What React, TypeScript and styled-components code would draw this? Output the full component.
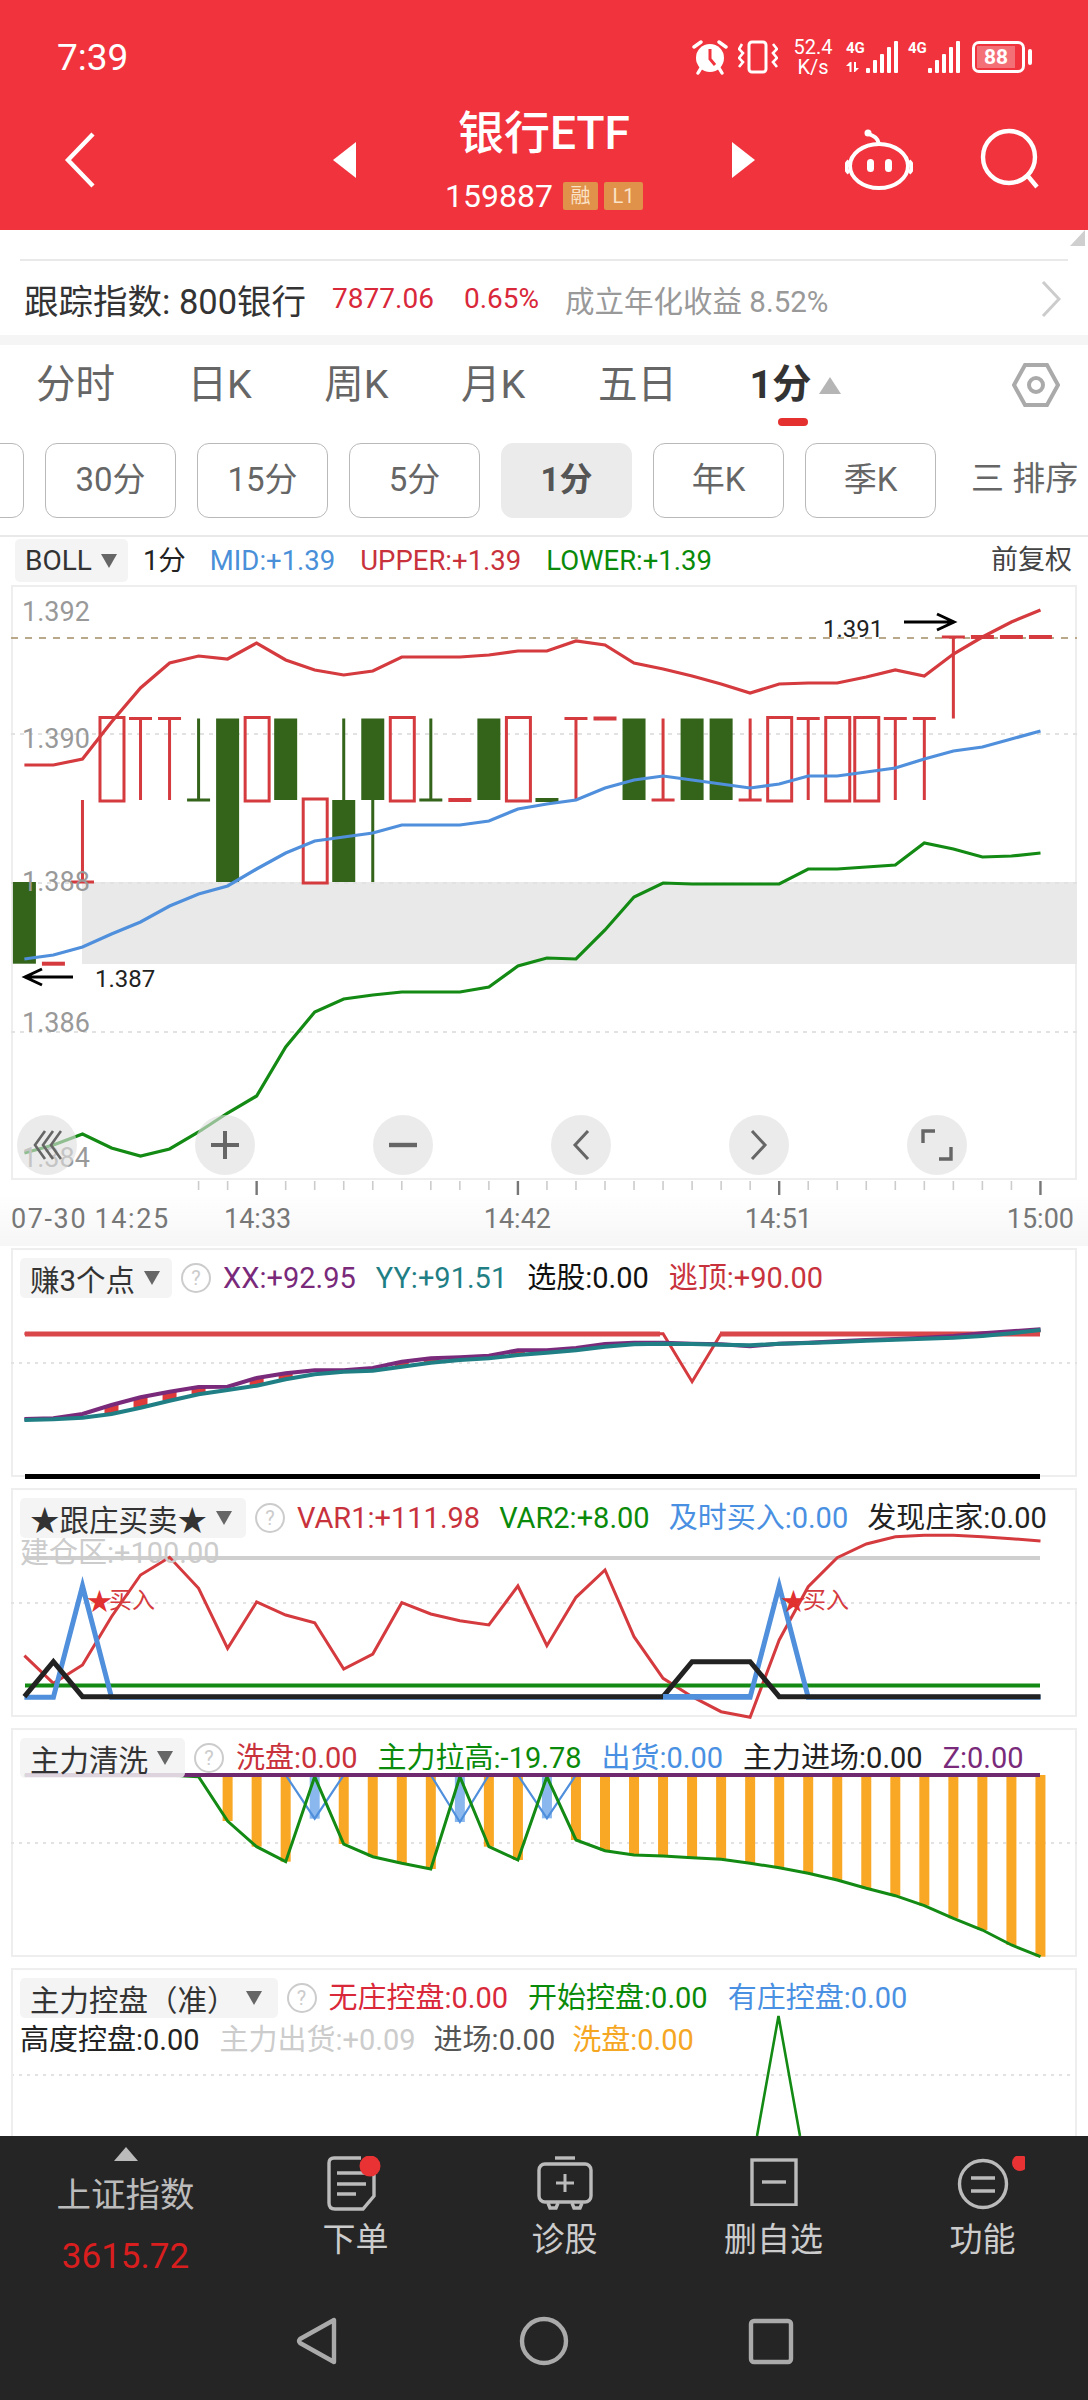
import React from 'react'
import styled, { createGlobalStyle } from 'styled-components'

const GlobalStyle = createGlobalStyle`
    html, body {
        margin: 0;
        padding: 0;
        background: #fff;
    }
    * {
        box-sizing: border-box;
    }
`

const RED = '#d43a3e'
const DARK_GREEN = '#33641a'
const LINE_GREEN = '#138a13'
const BLUE = '#4f8fdc'
const FONT = 'Roboto, "Noto Sans CJK SC", sans-serif'

const Page = styled.div`
    width: 1088px;
    height: 2400px;
    display: flex;
    flex-direction: column;
    overflow: hidden;
    background: #fff;
    font-family: ${FONT};
`

/* ---------- header ---------- */

const Header = styled.header`
    height: 230px;
    flex: none;
    background: #f0333d;
    color: #fff;
    display: flex;
    flex-direction: column;
`

const StatusBar = styled.div`
    height: 100px;
    flex: none;
    padding: 36px 63px 0 57px;
    display: flex;
    align-items: flex-start;
`

const Clock = styled.div`
    font-size: 37px;
    line-height: 44px;
    margin-right: auto;
`

const StatusIcons = styled.div`
    display: flex;
    align-items: center;
    height: 42px;
`

const VibrateWrap = styled.span`
    display: flex;
    margin-left: 10px;
`

const NetSpeed = styled.div`
    width: 46px;
    margin: 0 10px 0 12px;
    text-align: center;
    font-size: 20px;
    line-height: 20px;
`

const Signal = styled.div`
    position: relative;
    width: 52px;
    height: 32px;
    margin-right: 10px;
`

const SignalLabel = styled.span`
    position: absolute;
    left: 0;
    top: 0;
    font-size: 15px;
    line-height: 15px;
    font-weight: 700;
`

const Battery = styled.div`
    position: relative;
    width: 53px;
    height: 32px;
    margin-left: 2px;
    border: 3px solid #fff;
    border-radius: 7px;
    padding: 2px;
    &::after {
        content: '';
        position: absolute;
        right: -10px;
        top: 5px;
        width: 4px;
        height: 16px;
        border-radius: 2px;
        background: #fff;
    }
`

const BatteryFill = styled.div`
    width: 38px;
    height: 22px;
    background: rgba(255, 255, 255, 0.3);
    text-align: center;
    font-size: 21px;
    line-height: 22px;
    font-weight: 700;
`

const NavRow = styled.div`
    flex: 1;
    display: grid;
    grid-template-columns: 1fr 422px 1fr;
    align-items: center;
    padding-bottom: 10px;
`

const NavLeft = styled.div`
    padding-left: 64px;
    display: flex;
`

const NavRight = styled.div`
    display: flex;
    justify-content: flex-end;
    padding-right: 48px;
    gap: 67px;
`

const TitleBlock = styled.div`
    display: flex;
    align-items: center;
    justify-content: space-between;
`

const Titles = styled.div`
    display: flex;
    flex-direction: column;
    align-items: center;
`

const Title = styled.div`
    font-size: 46px;
    line-height: 52px;
    font-weight: 500;
`

const CodeRow = styled.div`
    display: flex;
    align-items: center;
    font-size: 32px;
    line-height: 36px;
    margin-top: 19px;
`

const Badge = styled.span`
    width: ${props => props.$width}px;
    height: 28px;
    margin-left: ${props => props.$gap}px;
    background: #e0914a;
    border-radius: 2px;
    text-align: center;
    font-size: 20px;
    line-height: 28px;
    color: #fbe3c8;
`

/* ---------- tracking row ---------- */

const TrackRow = styled.div`
    position: relative;
    height: 105px;
    flex: none;
    padding-top: 29px;
    &::before {
        content: '';
        position: absolute;
        right: 3px;
        top: 0;
        border-left: 15px solid transparent;
        border-bottom: 16px solid #cfcfcf;
    }
`

const TrackInner = styled.div`
    margin: 0 20px;
    border-top: 2px solid #e9e9e9;
    padding: 15px 4px 0;
    display: flex;
    align-items: center;
    height: 62px;
`

const TrackText = styled.span`
    font-size: ${props => props.$size}px;
    color: ${props => props.$color};
    margin-right: ${props => props.$gap}px;
    white-space: nowrap;
`

const Chevron = styled.svg`
    margin-left: auto;
    margin-right: 3px;
`

const GrayBand = styled.div`
    height: 10px;
    flex: none;
    background: #f5f5f5;
`

/* ---------- period tabs ---------- */

const Tabs = styled.div`
    height: 98px;
    flex: none;
    padding: 16px 28px 0 36px;
    display: flex;
    gap: 72.5px;
`

const Tab = styled.div`
    position: relative;
    font-size: 39.5px;
    line-height: 48px;
    height: 48px;
    color: ${props => (props.$active ? '#333' : '#666')};
    font-weight: ${props => (props.$active ? 700 : 400)};
`

const TabArrow = styled.span`
    position: absolute;
    left: 70px;
    top: 16px;
    border-left: 11px solid transparent;
    border-right: 11px solid transparent;
    border-bottom: 17px solid #b5b5b5;
`

const TabMark = styled.span`
    position: absolute;
    left: 29px;
    top: 57px;
    width: 30px;
    height: 8px;
    border-radius: 4px;
    background: #e4312f;
`

const GearIcon = styled.svg`
    margin-left: auto;
    margin-top: 2px;
`

const Periods = styled.div`
    height: 94px;
    flex: none;
    margin-left: -107px;
    display: flex;
    gap: 21px;
    border-bottom: 2px solid #e9e9e9;
`

const PeriodButton = styled.div`
    width: 131px;
    height: 75px;
    flex: none;
    border: 1px solid ${props => (props.$active ? '#ebebeb' : '#b9b9b9')};
    border-radius: 12px;
    background: ${props => (props.$active ? '#ebebeb' : '#fff')};
    color: ${props => (props.$active ? '#555' : '#666')};
    font-weight: ${props => (props.$active ? 700 : 400)};
    font-size: 33px;
    line-height: 72px;
    text-align: center;
`

const SortButton = styled.div`
    margin-left: 14px;
    font-size: 33px;
    line-height: 72px;
    color: #666;
    white-space: nowrap;
`

/* ---------- indicator legend ---------- */

const MainLegend = styled.div`
    height: 48px;
    flex: none;
    padding: 2px 16px 0 15px;
    display: flex;
    align-items: flex-start;
`

const Select = styled.div`
    height: ${props => props.$height || 40}px;
    padding: 0 ${props => props.$pad || 12}px 0 10px;
    background: rgba(242, 242, 242, 0.85);
    border-radius: 5px;
    display: flex;
    align-items: center;
    gap: 9px;
    flex: none;
    font-size: ${props => props.$size || 29.5}px;
    color: #333;
    white-space: nowrap;
`

const Caret = styled.span`
    border-left: 8px solid transparent;
    border-right: 8px solid transparent;
    border-top: 14px solid #666;
`

const MainItem = styled.span`
    font-size: 27.5px;
    line-height: 43px;
    margin-left: ${props => props.$gap}px;
    color: ${props => props.$color};
    white-space: nowrap;
`

const Adjust = styled.span`
    margin-left: auto;
    font-size: 27px;
    line-height: 43px;
    color: #444;
`

/* ---------- chart frames ---------- */

const Frame = styled.section`
    position: relative;
    flex: none;
    height: ${props => props.$height}px;
    margin: 0 11px ${props => props.$after}px;
    border: 2px solid #eee;
    background: #fff;
`

const OpenFrame = styled(Frame)`
    flex: 1;
    height: auto;
    margin-bottom: 0;
    border-bottom: 0;
    overflow: hidden;
`

const ChartSvg = styled.svg`
    position: absolute;
    left: -13px;
    top: -2px;
    width: 1088px;
    overflow: visible;
    font-family: ${FONT};
`

const Legend = styled.div`
    position: relative;
    z-index: 1;
    padding: 8px 0 0 7px;
    display: flex;
    flex-wrap: wrap;
    align-items: center;
    row-gap: 0;
    height: ${props => props.$height || 48}px;
`

const Help = styled.span`
    width: 30px;
    height: 30px;
    flex: none;
    margin: 0 12px 0 9px;
    border: 2px solid #ccc;
    border-radius: 50%;
    color: #ccc;
    text-align: center;
    font-size: 20px;
    line-height: 26px;
`

const Item = styled.span`
    font-size: 29px;
    line-height: 40px;
    color: ${props => props.$color};
    margin-right: ${props => props.$gap ?? 20}px;
    white-space: nowrap;
`

const LegendBreak = styled.div`
    flex-basis: 100%;
    height: 0;
`

const FaintLabel = styled.div`
    position: absolute;
    left: 7px;
    top: 47px;
    font-size: 29px;
    line-height: 32px;
    color: #ccc;
`

const FloatBar = styled.div`
    position: absolute;
    left: 4px;
    top: 528px;
    display: flex;
    gap: 118px;
`

const FloatButton = styled.div`
    width: 60px;
    height: 60px;
    border-radius: 50%;
    background: rgba(222, 222, 222, 0.62);
    display: flex;
    align-items: center;
    justify-content: center;
`

const TimeAxis = styled.div`
    position: relative;
    height: 66px;
    flex: none;
    margin-bottom: 2px;
    background: linear-gradient(#fff 20%, #f6f6f6 100%);
`

const AxisTicks = styled.svg`
    position: absolute;
    left: 0;
    top: 0;
`

const AxisLabels = styled.div`
    display: flex;
    padding: 22px 14px 0 11px;
    font-size: 27px;
    line-height: 34px;
    color: #777;
`

const AxisLabel = styled.span`
    width: ${props => props.$width}px;
    flex: none;
    text-align: ${props => props.$align || 'left'};
`

const AxisDate = styled(AxisLabel)`
    letter-spacing: 1.6px;
    word-spacing: -1px;
    white-space: nowrap;
`

/* ---------- bottom bar ---------- */

const BottomBar = styled.footer`
    height: 264px;
    flex: none;
    background: #252525;
    display: flex;
    flex-direction: column;
`

const BottomTabs = styled.div`
    height: 168px;
    flex: none;
    display: grid;
    grid-template-columns: 251px repeat(4, 209px);
`

const IndexTab = styled.div`
    display: flex;
    flex-direction: column;
    align-items: center;
    padding-top: 11px;
`

const IndexArrow = styled.span`
    border-left: 12px solid transparent;
    border-right: 12px solid transparent;
    border-bottom: 14px solid #bbb;
`

const IndexName = styled.div`
    margin-top: 14px;
    font-size: 34.5px;
    line-height: 40px;
    color: #bbb;
`

const IndexValue = styled.div`
    margin-top: 21px;
    font-size: 35px;
    line-height: 42px;
    color: #d81e1e;
`

const BarTab = styled.div`
    display: flex;
    flex-direction: column;
    align-items: center;
    padding-top: 20px;
`

const IconSlot = styled.div`
    height: 58px;
    display: flex;
    align-items: flex-start;
`

const BarTabLabel = styled.div`
    margin-top: 5px;
    font-size: 33px;
    line-height: 42px;
    color: #ccc;
`

const SystemNav = styled.div`
    flex: 1;
    display: flex;
    justify-content: center;
    gap: 167px;
    padding-top: 7px;
`

/* ---------- chart data ---------- */

const xAt = (i: number) => 24.4 + 29.03 * i
const toPoints = (ys: number[], from = 0) => ys.map((y, i) => `${xAt(i + from).toFixed(1)},${y.toFixed(1)}`).join(' ')
const zoomY = (base: number, ys: number[]) => ys.map(py => base + py / 3)

const LEVELS = [637, 718.5, 800, 882, 963.7]

type Candle = ['solid' | 'hollow' | 'top' | 'bottom' | 'dash', 'r' | 'g', number, number?]

const CANDLES: Candle[] = [
    ['solid', 'g', 3, 4],
    ['dash', 'r', 4],
    ['bottom', 'r', 2, 3],
    ['hollow', 'r', 1, 2],
    ['top', 'r', 1, 2],
    ['top', 'r', 1, 2],
    ['bottom', 'g', 1, 2],
    ['solid', 'g', 1, 3],
    ['hollow', 'r', 1, 2],
    ['solid', 'g', 1, 2],
    ['hollow', 'r', 2, 3],
    ['solid', 'g', 2, 3],
    ['solid', 'g', 1, 2],
    ['hollow', 'r', 1, 2],
    ['bottom', 'g', 1, 2],
    ['dash', 'r', 2],
    ['solid', 'g', 1, 2],
    ['hollow', 'r', 1, 2],
    ['dash', 'g', 2],
    ['top', 'r', 1, 2],
    ['dash', 'r', 1],
    ['solid', 'g', 1, 2],
    ['bottom', 'r', 1, 2],
    ['solid', 'g', 1, 2],
    ['solid', 'g', 1, 2],
    ['bottom', 'r', 1, 2],
    ['hollow', 'r', 1, 2],
    ['top', 'r', 1, 2],
    ['hollow', 'r', 1, 2],
    ['hollow', 'r', 1, 2],
    ['top', 'r', 1, 2],
    ['top', 'r', 1, 2],
    ['top', 'r', 0, 1],
    ['dash', 'r', 0],
    ['dash', 'r', 0],
    ['dash', 'r', 0],
]

// extra wicks sitting next to a body
const WICKS: [number, number, number][] = [
    [11, 1, 2],
    [12, 2, 3],
]

const UPPER = [
    765, 765, 759, 722, 688, 663, 656, 659, 643, 660, 670, 675, 671, 657, 657, 657, 655, 651, 651, 641, 645, 663, 669,
    676, 684, 693, 684, 683, 683, 677, 670, 676, 654, 637, 622, 610,
]
const MID = [
    959, 955, 947, 934, 922, 906, 894, 886, 869, 853, 841, 837, 833, 825, 825, 825, 821, 809, 804, 800, 788, 780, 776,
    780, 784, 788, 784, 776, 776, 772, 768, 759, 751, 747, 739, 731,
]
const LOWER = [
    1153, 1145, 1134, 1148, 1156, 1149, 1132, 1113, 1096, 1047, 1012, 999, 995, 992, 992, 992, 987, 966, 958, 959, 930,
    897, 883, 884, 884, 884, 884, 869, 869, 867, 865, 843, 849, 857, 856, 853,
]

const XX = zoomY(1240, [
    537, 535, 522, 495, 472, 455, 441, 440, 414, 400, 391, 391, 384, 365, 355, 352, 347, 331, 331, 324, 312, 308, 308,
    311, 313, 319, 311, 308, 304, 300, 297, 293, 288, 280, 274, 268,
])
const YY = zoomY(1240, [
    540, 538, 533, 522, 503, 482, 463, 450, 437, 418, 403, 395, 392, 380, 368, 360, 355, 345, 338, 331, 320, 313, 311,
    312, 314, 316, 311, 309, 306, 302, 299, 296, 293, 288, 280, 270,
])
const ESCAPE = zoomY(1240, [
    281, 281, 281, 281, 281, 281, 281, 281, 281, 281, 281, 281, 281, 281, 281, 281, 281, 281, 281, 281, 281, 281, 281,
    425, 281, 281, 281, 281, 281, 281, 281, 281, 281, 281, 281, 273,
])

const VAR1 = zoomY(1480, [
    527, 610, 555, 410, 285, 232, 325, 505, 366, 405, 428, 567, 522, 368, 402, 422, 435, 318, 497, 352, 270, 470, 595,
    650, 695, 712, 480, 320, 233, 192, 170, 166, 166, 170, 176, 183,
])
const BUY_LOW = Array.from({ length: 36 }, (_, i) => (i === 2 || i === 26 ? 318 : 652))
const BANKER = Array.from({ length: 36 }, (_, i) => (i === 1 || i === 23 || i === 24 || i === 25 ? 545 : 650))

const WASH_BARS: [number, number, boolean?][] = [
    [7, 303],
    [8, 380],
    [9, 425],
    [10, 296, true],
    [11, 372],
    [12, 410],
    [13, 430],
    [14, 447],
    [15, 306, true],
    [16, 380],
    [17, 420],
    [18, 295, true],
    [19, 360],
    [20, 392],
    [21, 405],
    [22, 408],
    [23, 413],
    [24, 418],
    [25, 430],
    [26, 443],
    [27, 460],
    [28, 480],
    [29, 505],
    [30, 527],
    [31, 557],
    [32, 595],
    [33, 630],
    [34, 675],
    [35, 710],
]
const PULL_UP = zoomY(1720, [
    166, 166, 166, 166, 166, 166, 170, 303, 380, 425, 170, 372, 410, 430, 447, 170, 380, 420, 170, 360, 392, 405, 408,
    413, 418, 430, 443, 460, 480, 505, 527, 557, 595, 630, 675, 710,
])

const WEEKS = ['分时', '日K', '周K', '月K', '五日']
const PERIODS = ['30分', '15分', '5分', '1分', '年K', '季K']

/* ---------- drawings ---------- */

const renderCandle = ([kind, tone, a, b]: Candle, i: number) => {
    const color = tone === 'r' ? RED : DARK_GREEN
    const x = xAt(i)
    const top = LEVELS[a]
    const bottom = b === undefined ? top : LEVELS[b]
    if (kind === 'solid') return <rect key={i} x={x - 11.5} y={top} width={23} height={bottom - top} fill={color} />
    if (kind === 'hollow')
        return (
            <rect key={i} x={x - 11.5} y={top - 1} width={24} height={bottom - top + 2} fill="none" stroke={color} strokeWidth={3} />
        )
    if (kind === 'dash') return <rect key={i} x={x - 11.5} y={top - 2} width={23} height={4} fill={color} />
    return (
        <g key={i} fill={color}>
            <rect x={x - 1.5} y={top} width={3} height={bottom - top} />
            <rect x={x - 11.5} y={(kind === 'top' ? top : bottom) - 1.5} width={23} height={3} />
        </g>
    )
}

const MainChart = () => (
    <ChartSvg viewBox="0 585 1088 595" height={595}>
        <rect x={82} y={882} width={995} height={82} fill="#e9e9e9" />
        <line x1={11} x2={1077} y1={638} y2={638} stroke="#b9a98a" strokeWidth={2} strokeDasharray="7 7" />
        {[734, 883, 1032].map(y => (
            <line key={y} x1={11} x2={1077} y1={y} y2={y} stroke="#e2e2e2" strokeWidth={2} strokeDasharray="4 5" />
        ))}
        {CANDLES.map(renderCandle)}
        {WICKS.map(([i, a, b]) => (
            <rect key={i} x={xAt(i) - 1.5} y={LEVELS[a]} width={3} height={LEVELS[b] - LEVELS[a]} fill={DARK_GREEN} />
        ))}
        <polyline points={toPoints(UPPER)} fill="none" stroke={RED} strokeWidth={3.2} />
        <polyline points={toPoints(MID)} fill="none" stroke={BLUE} strokeWidth={3.2} />
        <polyline points={toPoints(LOWER)} fill="none" stroke={LINE_GREEN} strokeWidth={3.2} />
        <g fill="#999" fontSize={27}>
            <text x={22} y={620.5}>1.392</text>
            <text x={22} y={748}>1.390</text>
            <text x={22} y={891}>1.388</text>
            <text x={22} y={1032}>1.386</text>
            <text x={22} y={1167}>1.384</text>
        </g>
        <g fill="#222" fontSize={24}>
            <text x={823} y={637}>1.391</text>
            <text x={95} y={987}>1.387</text>
        </g>
        <g fill="none" stroke="#000" strokeWidth={3}>
            <path d="M904 622 H953 M937 614 L954 622 L937 630" />
            <path d="M73 977 H26 M42 969 L25 977 L42 985" />
        </g>
    </ChartSvg>
)

const EarnChart = () => (
    <ChartSvg viewBox="0 1248 1088 229" height={229}>
        <line x1={11} x2={1077} y1={1363} y2={1363} stroke="#e2e2e2" strokeWidth={2} strokeDasharray="3 5" />
        {XX.map((y, i) =>
            YY[i] - y > 4 ? <rect key={i} x={xAt(i) - 7} y={y} width={14} height={YY[i] - y} fill="#df3a3a" /> : null,
        )}
        <polyline points={toPoints(ESCAPE)} fill="none" stroke={RED} strokeWidth={3} />
        <rect x={25} y={1331.5} width={635} height={5} fill="#d9474b" />
        <rect x={720} y={1331.5} width={320} height={5} fill="#d9474b" />
        <polyline points={toPoints(XX)} fill="none" stroke="#7a2a7a" strokeWidth={4} />
        <polyline points={toPoints(YY)} fill="none" stroke="#1f7f85" strokeWidth={4} />
        <rect x={25} y={1474} width={1015} height={5} fill="#000" />
    </ChartSvg>
)

const BuyLabel = ({ x }: { x: number }) => (
    <g>
        <text x={x} y={1610} fill="#e03030" fontSize={25}>★</text>
        <text x={x + 22} y={1608} fill={RED} fontSize={23}>买入</text>
    </g>
)

const BankerChart = () => (
    <ChartSvg viewBox="0 1488 1088 229" height={229}>
        <line x1={11} x2={1077} y1={1603} y2={1603} stroke="#e2e2e2" strokeWidth={2} strokeDasharray="3 5" />
        <rect x={25} y={1556} width={1015} height={4} fill="#cfcfcf" />
        <polyline points={toPoints(VAR1)} fill="none" stroke={RED} strokeWidth={3} />
        <rect x={25} y={1683.5} width={1015} height={4} fill={LINE_GREEN} />
        <polyline points={toPoints(zoomY(1480, BUY_LOW))} fill="none" stroke={BLUE} strokeWidth={5} />
        <polyline points={toPoints(zoomY(1480, BANKER).slice(0, 23))} fill="none" stroke="#222" strokeWidth={5} />
        <polyline points={toPoints(zoomY(1480, BANKER).slice(22), 22)} fill="none" stroke="#222" strokeWidth={5} />
        <rect x={xAt(22)} y={1694} width={xAt(25) - xAt(22)} height={5} fill={BLUE} />
        <BuyLabel x={87} />
        <BuyLabel x={781} />
    </ChartSvg>
)

const WashChart = () => (
    <ChartSvg viewBox="0 1728 1088 229" height={229}>
        <line x1={11} x2={1077} y1={1843} y2={1843} stroke="#e2e2e2" strokeWidth={2} strokeDasharray="3 5" />
        {WASH_BARS.map(([i, py, blue]) => (
            <rect
                key={i}
                x={xAt(i) - 5}
                y={1775}
                width={10}
                height={1720 + py / 3 - 1775}
                fill={blue ? '#8ab8ee' : '#f9a825'}
            />
        ))}
        <g fill="none" stroke={BLUE} strokeWidth={2.2}>
            <polyline points={`${xAt(9)},1775 ${xAt(10)},1818.7 ${xAt(11)},1775`} />
            <polyline points={`${xAt(14)},1775 ${xAt(15)},1822 ${xAt(16)},1775`} />
            <polyline points={`${xAt(17)},1775 ${xAt(18)},1818.3 ${xAt(19)},1775`} />
        </g>
        <polyline points={toPoints(PULL_UP)} fill="none" stroke={LINE_GREEN} strokeWidth={3} />
        <rect x={25} y={1773} width={1015} height={4} fill="#6f2a6f" />
    </ChartSvg>
)

const ControlChart = () => (
    <ChartSvg viewBox="0 1968 1088 168" height={168}>
        <line x1={11} x2={1077} y1={2075} y2={2075} stroke="#e2e2e2" strokeWidth={2} strokeDasharray="3 5" />
        <polyline points="757,2136 778.5,2016 800,2136" fill="none" stroke={LINE_GREEN} strokeWidth={2.6} />
    </ChartSvg>
)

const AlarmIcon = () => (
    <svg width={36} height={36} viewBox="0 0 36 36">
        <circle cx={18} cy={19} r={14} fill="#fff" />
        <path d="M18 10 V20 L23 26" fill="none" stroke="#f0333d" strokeWidth={3} />
        <path d="M2 8 L9 3 M34 8 L27 3" stroke="#fff" strokeWidth={3.4} strokeLinecap="round" />
        <path d="M6 34 L9 29 M30 34 L27 29" stroke="#fff" strokeWidth={3.4} strokeLinecap="round" />
    </svg>
)

const VibrateIcon = () => (
    <VibrateWrap>
        <svg width={40} height={34} viewBox="0 0 40 34">
            <rect x={11} y={2} width={17} height={30} rx={3} fill="none" stroke="#fff" strokeWidth={3} />
            <path d="M4 4 L1 9 L5 13 L1 18 L5 22 L1 27" fill="none" stroke="#fff" strokeWidth={2.6} />
            <path d="M35 4 L39 9 L35 13 L39 18 L35 22 L39 27" fill="none" stroke="#fff" strokeWidth={2.6} />
        </svg>
    </VibrateWrap>
)

const SignalBars = ({ arrows }: { arrows?: boolean }) => (
    <svg width={52} height={32} viewBox="0 0 52 32" fill="#fff">
        {arrows && <path d="M0 25 L4 21 H5.5 V31 H3.5 V25 Z M8 21 H10 V27 H13 L9 31 H8 Z" />}
        <rect x={20} y={27} width={4} height={5} rx={1} />
        <rect x={27} y={19} width={4} height={13} rx={1} />
        <rect x={34} y={13} width={4} height={19} rx={1} />
        <rect x={41} y={6} width={4} height={26} rx={1} />
        <rect x={48} y={0} width={4} height={32} rx={1} />
    </svg>
)

const BackIcon = () => (
    <svg width={34} height={58} viewBox="0 0 34 58">
        <path d="M29 3 L4 29 L29 55" fill="none" stroke="#fff" strokeWidth={4.4} />
    </svg>
)

const Triangle = ({ right }: { right?: boolean }) => (
    <svg width={23} height={36} viewBox="0 0 23 36">
        <path d={right ? 'M0 0 L23 18 L0 36 Z' : 'M23 0 L0 18 L23 36 Z'} fill="#fff" />
    </svg>
)

const RobotIcon = () => (
    <svg width={68} height={64} viewBox="0 0 68 64" fill="none" stroke="#fff" strokeWidth={4}>
        <ellipse cx={34} cy={38} rx={29} ry={22} />
        <path d="M4 33 C0 36 0 42 4 45 M64 33 C68 36 68 42 64 45" />
        <path d="M34 16 C33 10 29 8 24 6" />
        <circle cx={23} cy={5} r={3.5} fill="#fff" stroke="none" />
        <rect x={22} y={31} width={7} height={13} rx={3.5} fill="#fff" stroke="none" />
        <rect x={40} y={31} width={7} height={13} rx={3.5} fill="#fff" stroke="none" />
    </svg>
)

const SearchIcon = () => (
    <svg width={60} height={62} viewBox="0 0 60 62" fill="none" stroke="#fff" strokeWidth={4.4}>
        <circle cx={29} cy={29} r={26} />
        <path d="M47 47 L57 59" />
    </svg>
)

const FloatIcons = [
    <svg key="rewind" width={30} height={32} viewBox="0 0 30 32" fill="none" stroke="#666" strokeWidth={2.6}>
        <path d="M13 2 L3 16 L13 30 M21 2 L11 16 L21 30 M29 2 L19 16 L29 30" />
    </svg>,
    <svg key="plus" width={30} height={30} viewBox="0 0 30 30" stroke="#666" strokeWidth={4}>
        <path d="M15 1 V29 M1 15 H29" />
    </svg>,
    <svg key="minus" width={30} height={30} viewBox="0 0 30 30" stroke="#666" strokeWidth={4.4}>
        <path d="M1 15 H29" />
    </svg>,
    <svg key="prev" width={18} height={30} viewBox="0 0 18 30" fill="none" stroke="#666" strokeWidth={3}>
        <path d="M16 1 L3 15 L16 29" />
    </svg>,
    <svg key="next" width={18} height={30} viewBox="0 0 18 30" fill="none" stroke="#666" strokeWidth={3}>
        <path d="M2 1 L15 15 L2 29" />
    </svg>,
    <svg key="fit" width={32} height={32} viewBox="0 0 32 32" fill="none" stroke="#666" strokeWidth={3.4}>
        <path d="M14 2 H2 V14 M30 18 V30 H18" />
    </svg>,
]

const AxisTickMarks = () => (
    <AxisTicks width={1088} height={20}>
        {Array.from({ length: 30 }, (_, n) => {
            const i = n + 6
            const major = (i - 8) % 9 === 0
            return (
                <line
                    key={i}
                    x1={xAt(i)}
                    x2={xAt(i)}
                    y1={1}
                    y2={major ? 15 : 10}
                    stroke={major ? '#777' : '#ccc'}
                    strokeWidth={major ? 2.4 : 1.6}
                />
            )
        })}
    </AxisTicks>
)

const OrderIcon = () => (
    <svg width={64} height={58} viewBox="0 0 64 58" fill="none" stroke="#bbb" strokeWidth={3.4}>
        <path d="M37 2 H10 Q5 2 5 7 V47 Q5 53 11 53 H39 L50 40 V14" />
        <path d="M13 17 H42 M13 28 H42 M13 38 H32" />
        <circle cx={46} cy={10} r={10.5} fill="#e83234" stroke="none" />
    </svg>
)

const DiagnoseIcon = () => (
    <svg width={58} height={54} viewBox="0 0 58 54" fill="none" stroke="#bbb" strokeWidth={3.4}>
        <path d="M19 2 H39" />
        <rect x={3} y={8} width={52} height={38} rx={6} />
        <path d="M29 18 V36 M20 27 H38" strokeWidth={3} />
        <path d="M12 47 L14 52 H20 L22 47 M36 47 L38 52 H44 L46 47" />
    </svg>
)

const RemoveIcon = () => (
    <svg width={48} height={50} viewBox="0 0 48 50" fill="none" stroke="#bbb" strokeWidth={3.4}>
        <rect x={2} y={4} width={44} height={45} />
        <path d="M12 26 H36" />
    </svg>
)

const MoreIcon = () => (
    <svg width={84} height={58} viewBox="0 0 84 58" fill="none" stroke="#bbb" strokeWidth={3.4}>
        <circle cx={42} cy={28} r={23.5} />
        <path d="M30 22 H54 M30 35 H54" />
        <circle cx={79} cy={7} r={8} fill="#e83234" stroke="none" />
    </svg>
)

const App = () => {
    return (
        <Page>
            <GlobalStyle />
            <Header>
                <StatusBar>
                    <Clock>7:39</Clock>
                    <StatusIcons>
                        <AlarmIcon />
                        <VibrateIcon />
                        <NetSpeed>
                            52.4
                            <br />
                            K/s
                        </NetSpeed>
                        <Signal>
                            <SignalLabel>4G</SignalLabel>
                            <SignalBars arrows />
                        </Signal>
                        <Signal>
                            <SignalLabel>4G</SignalLabel>
                            <SignalBars />
                        </Signal>
                        <Battery>
                            <BatteryFill>88</BatteryFill>
                        </Battery>
                    </StatusIcons>
                </StatusBar>
                <NavRow>
                    <NavLeft>
                        <BackIcon />
                    </NavLeft>
                    <TitleBlock>
                        <Triangle />
                        <Titles>
                            <Title>银行ETF</Title>
                            <CodeRow>
                                159887
                                <Badge $width={35} $gap={10}>融</Badge>
                                <Badge $width={39} $gap={6}>L1</Badge>
                            </CodeRow>
                        </Titles>
                        <Triangle right />
                    </TitleBlock>
                    <NavRight>
                        <RobotIcon />
                        <SearchIcon />
                    </NavRight>
                </NavRow>
            </Header>

            <TrackRow>
                <TrackInner>
                    <TrackText $size={34.5} $color="#333" $gap={26}>跟踪指数: 800银行</TrackText>
                    <TrackText $size={28} $color="#d9283a" $gap={30}>7877.06</TrackText>
                    <TrackText $size={28} $color="#d9283a" $gap={26}>0.65%</TrackText>
                    <TrackText $size={29.5} $color="#999" $gap={0}>成立年化收益 8.52%</TrackText>
                    <Chevron width={20} height={36} viewBox="0 0 20 36">
                        <path d="M2 1 L18 18 L2 35" fill="none" stroke="#ccc" strokeWidth={3} />
                    </Chevron>
                </TrackInner>
            </TrackRow>
            <GrayBand />

            <Tabs>
                {WEEKS.map(name => (
                    <Tab key={name}>{name}</Tab>
                ))}
                <Tab $active>
                    1分
                    <TabArrow />
                    <TabMark />
                </Tab>
                <GearIcon width={48} height={44} viewBox="0 0 48 44" fill="none" stroke="#aaa">
                    <path d="M13 2 H35 L46 22 L35 42 H13 L2 22 Z" strokeWidth={4} />
                    <circle cx={24} cy={22} r={7} strokeWidth={4} />
                </GearIcon>
            </Tabs>
            <Periods>
                <PeriodButton />
                {PERIODS.map(name => (
                    <PeriodButton key={name} $active={name === '1分'}>{name}</PeriodButton>
                ))}
                <SortButton>三 排序</SortButton>
            </Periods>

            <MainLegend>
                <Select $height={43} $pad={11} $size={28}>
                    BOLL
                    <Caret />
                </Select>
                <MainItem $gap={15} $color="#222">1分</MainItem>
                <MainItem $gap={24} $color="#4a90d9">MID:+1.39</MainItem>
                <MainItem $gap={25} $color="#c8323c">UPPER:+1.39</MainItem>
                <MainItem $gap={25} $color="#0a8a0a">LOWER:+1.39</MainItem>
                <Adjust>前复权</Adjust>
            </MainLegend>

            <Frame $height={595} $after={0}>
                <MainChart />
                <FloatBar>
                    {FloatIcons.map(icon => (
                        <FloatButton key={icon.key}>{icon}</FloatButton>
                    ))}
                </FloatBar>
            </Frame>
            <TimeAxis>
                <AxisTickMarks />
                <AxisLabels>
                    <AxisDate $width={213}>07-30 14:25</AxisDate>
                    <AxisLabel $width={66}>14:33</AxisLabel>
                    <AxisLabel $width={261} $align="right">14:42</AxisLabel>
                    <AxisLabel $width={261} $align="right">14:51</AxisLabel>
                    <AxisLabel $width={262} $align="right">15:00</AxisLabel>
                </AxisLabels>
            </TimeAxis>
            <Frame $height={229} $after={11}>
                <EarnChart />
                <Legend>
                    <Select>
                        赚3个点
                        <Caret />
                    </Select>
                    <Help>?</Help>
                    <Item $color="#7a2a7a">XX:+92.95</Item>
                    <Item $color="#1f7f85">YY:+91.51</Item>
                    <Item $color="#111">选股:0.00</Item>
                    <Item $color="#c8323c">逃顶:+90.00</Item>
                </Legend>
            </Frame>
            <Frame $height={229} $after={11}>
                <BankerChart />
                <Legend>
                    <Select $pad={14}>
                        ★跟庄买卖★
                        <Caret />
                    </Select>
                    <Help>?</Help>
                    <Item $color="#c8323c" $gap={19}>VAR1:+111.98</Item>
                    <Item $color="#0a8a0a" $gap={19}>VAR2:+8.00</Item>
                    <Item $color="#4a90e2" $gap={19}>及时买入:0.00</Item>
                    <Item $color="#222" $gap={0}>发现庄家:0.00</Item>
                </Legend>
                <FaintLabel>建仓区:+100.00</FaintLabel>
            </Frame>
            <Frame $height={229} $after={11}>
                <WashChart />
                <Legend>
                    <Select>
                        主力清洗
                        <Caret />
                    </Select>
                    <Help>?</Help>
                    <Item $color="#c8323c">洗盘:0.00</Item>
                    <Item $color="#0a8a0a">主力拉高:-19.78</Item>
                    <Item $color="#4a90e2">出货:0.00</Item>
                    <Item $color="#222">主力进场:0.00</Item>
                    <Item $color="#7a2a7a" $gap={0}>Z:0.00</Item>
                </Legend>
            </Frame>
            <OpenFrame $height={0} $after={0}>
                <ControlChart />
                <Legend $height={90}>
                    <Select $pad={16}>
                        主力控盘（准）
                        <Caret />
                    </Select>
                    <Help>?</Help>
                    <Item $color="#d9283a">无庄控盘:0.00</Item>
                    <Item $color="#0a8a0a">开始控盘:0.00</Item>
                    <Item $color="#4a90e2">有庄控盘:0.00</Item>
                    <LegendBreak />
                    <Item $color="#222">高度控盘:0.00</Item>
                    <Item $color="#ccc" $gap={18}>主力出货:+0.09</Item>
                    <Item $color="#555" $gap={17}>进场:0.00</Item>
                    <Item $color="#f5a623">洗盘:0.00</Item>
                </Legend>
            </OpenFrame>

            <BottomBar>
                <BottomTabs>
                    <IndexTab>
                        <IndexArrow />
                        <IndexName>上证指数</IndexName>
                        <IndexValue>3615.72</IndexValue>
                    </IndexTab>
                    <BarTab>
                        <IconSlot><OrderIcon /></IconSlot>
                        <BarTabLabel>下单</BarTabLabel>
                    </BarTab>
                    <BarTab>
                        <IconSlot><DiagnoseIcon /></IconSlot>
                        <BarTabLabel>诊股</BarTabLabel>
                    </BarTab>
                    <BarTab>
                        <IconSlot><RemoveIcon /></IconSlot>
                        <BarTabLabel>删自选</BarTabLabel>
                    </BarTab>
                    <BarTab>
                        <IconSlot><MoreIcon /></IconSlot>
                        <BarTabLabel>功能</BarTabLabel>
                    </BarTab>
                </BottomTabs>
                <SystemNav>
                    <svg width={60} height={60} viewBox="0 0 60 60" fill="none" stroke="#aaa" strokeWidth={4.4}>
                        <path d="M47 9 V51 L13 32 Q11 30 13 28 Z" strokeLinejoin="round" />
                    </svg>
                    <svg width={60} height={60} viewBox="0 0 60 60" fill="none" stroke="#aaa" strokeWidth={4.4}>
                        <circle cx={30} cy={30} r={22} />
                    </svg>
                    <svg width={60} height={60} viewBox="0 0 60 60" fill="none" stroke="#aaa" strokeWidth={4.4}>
                        <rect x={10} y={10} width={40} height={41} rx={3} />
                    </svg>
                </SystemNav>
            </BottomBar>
        </Page>
    )
}

export default App
